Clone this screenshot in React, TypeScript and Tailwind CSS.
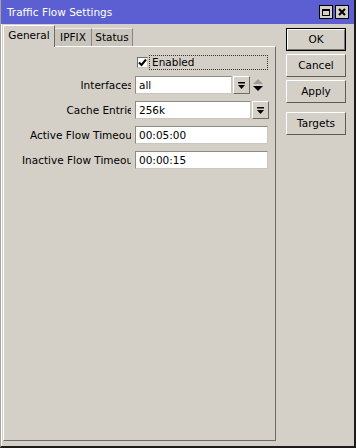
import React from "react";

function DropIcon() {
  return (
    <svg width="9" height="9" viewBox="0 0 9 9">
      <rect x="1" y="1" width="7" height="1.5" fill="#000" />
      <path d="M1 4 L8 4 L4.5 8 Z" fill="#000" />
    </svg>
  );
}

function DropButton() {
  return (
    <div className="w-[17px] h-[18px] shrink-0 flex items-center justify-center bg-[#d4d0c8] border border-t-white border-l-white border-b-[#6f6c66] border-r-[#6f6c66]">
      <DropIcon />
    </div>
  );
}

function Field({ value, width }: { value: string; width: string }) {
  return (
    <div
      className={`${width} h-[18px] shrink-0 bg-white border border-[#8e8b85] border-b-[#c9c6bf] border-r-[#c9c6bf] flex items-center pl-[3px] text-black`}
    >
      {value}
    </div>
  );
}

function Label({ text, shift, start }: { text: string; shift: string; start?: boolean }) {
  return (
    <div className={`w-[109px] shrink-0 overflow-hidden flex ${start ? "justify-start" : "justify-end"}`}>
      <span className={`whitespace-nowrap shrink-0 ${shift}`}>{text}</span>
    </div>
  );
}

function SideButton({ label, isDefault }: { label: string; isDefault?: boolean }) {
  if (isDefault) {
    return (
      <div className="w-[60px] h-[23px] border border-black">
        <div className="h-full border border-t-white border-l-white border-b-[#7a7770] border-r-[#7a7770] flex items-center justify-center">
          {label}
        </div>
      </div>
    );
  }
  return (
    <div className="w-[60px] h-[23px] border border-t-white border-l-white border-b-[#5e5b55] border-r-[#5e5b55] flex items-center justify-center">
      {label}
    </div>
  );
}

export default function App() {
  return (
    <div className="w-[356px] h-[448px] bg-[#d4d0c8] border-l border-l-[#a8a49c] border-r-2 border-b-2 border-r-[#1c1c1c] border-b-[#1c1c1c] flex flex-col font-['DejaVu_Sans',sans-serif] text-[10.5px] text-black leading-none">
      {/* title bar */}
      <div className="h-[24px] shrink-0 bg-[#5b5fd1] flex items-center pl-[6px] pr-[5px] text-white">
        <span className="flex-1 text-[10.5px]">Traffic Flow Settings</span>
        <div className="flex gap-[2px]">
          <div className="w-[14px] h-[14px] bg-[#d4d0c8] border border-black flex items-center justify-center">
            <div className="w-[8px] h-[7px] border border-black border-t-2" />
          </div>
          <div className="w-[14px] h-[14px] bg-[#d4d0c8] border border-black flex items-center justify-center">
            <svg width="8" height="8" viewBox="0 0 8 8">
              <path d="M1 1 L7 7 M7 1 L1 7" stroke="#000" strokeWidth="2" />
            </svg>
          </div>
        </div>
      </div>

      {/* body */}
      <div className="flex-1 flex border-l border-l-white pl-[1px] pt-[1px] pb-[5px]">
        <div className="w-[273px] flex flex-col">
          {/* tabs */}
          <div className="h-[21px] shrink-0 flex items-end">
            <div className="relative z-10 -mb-px h-[22px] w-[52px] bg-[#d4d0c8] border-t border-l border-r border-t-white border-l-white border-r-[#6f6c66] flex items-center justify-center pb-[2px]">
              General
            </div>
            <div className="h-[18px] w-[37px] bg-[#c9c5bd] border-t border-r border-t-[#ecebe7] border-r-[#8a877f] flex items-center justify-center">
              IPFIX
            </div>
            <div className="h-[18px] w-[41px] bg-[#c9c5bd] border-t border-r border-t-[#ecebe7] border-r-[#8a877f] flex items-center justify-center">
              Status
            </div>
          </div>

          {/* panel */}
          <div className="flex-1 border border-t-white border-l-white border-b-[#6f6c66] border-r-[#6f6c66] pt-[8px]">
            <div className="flex flex-col gap-[6px]">
              <div className="h-[15px] flex items-center pl-[133px]">
                <div className="w-[11px] h-[11px] bg-white border border-[#6f6c66] border-b-[#c9c6bf] border-r-[#c9c6bf] flex items-center justify-center">
                  <svg width="9" height="9" viewBox="0 0 9 9">
                    <path d="M1 4.5 L3.5 7 L8 1.5" stroke="#000" strokeWidth="2" fill="none" />
                  </svg>
                </div>
                <div className="ml-[1px] w-[119px] h-[15px] border border-dotted border-[#333] flex items-center pl-[2px]">
                  Enabled
                </div>
              </div>

              <div className="flex flex-col gap-[7px]">
                <div className="flex items-center pl-[18px]">
                  <Label text="Interfaces" shift="-mr-[2px]" />
                  <div className="ml-[4px] flex items-center">
                    <Field value="all" width="w-[97px]" />
                    <div className="ml-[1px]">
                      <DropButton />
                    </div>
                    <div className="ml-[2px] w-[12px] flex flex-col items-center gap-[2px]">
                      <svg width="10" height="5" viewBox="0 0 10 5">
                        <path d="M0 5 L5 0 L10 5 Z" fill="#9d9a94" />
                      </svg>
                      <svg width="10" height="5" viewBox="0 0 10 5">
                        <path d="M0 0 L10 0 L5 5 Z" fill="#000" />
                      </svg>
                    </div>
                  </div>
                </div>

                <div className="flex items-center pl-[18px]">
                  <Label text="Cache Entries" shift="-mr-[8px]" />
                  <div className="ml-[4px] flex items-center">
                    <Field value="256k" width="w-[116px]" />
                    <div className="ml-[1px]">
                      <DropButton />
                    </div>
                  </div>
                </div>

                <div className="flex items-center pl-[18px]">
                  <Label text="Active Flow Timeout" shift="-mr-[5px]" />
                  <div className="ml-[4px]">
                    <Field value="00:05:00" width="w-[133px]" />
                  </div>
                </div>

                <div className="flex items-center pl-[18px]">
                  <Label text="Inactive Flow Timeout" shift="" start />
                  <div className="ml-[4px]">
                    <Field value="00:00:15" width="w-[133px]" />
                  </div>
                </div>
              </div>
            </div>
          </div>
        </div>

        {/* buttons */}
        <div className="ml-[10px] pt-[3px] flex flex-col gap-[3px]">
          <SideButton label="OK" isDefault />
          <SideButton label="Cancel" />
          <SideButton label="Apply" />
          <div className="mt-[6px]">
            <SideButton label="Targets" />
          </div>
        </div>
      </div>
    </div>
  );
}
